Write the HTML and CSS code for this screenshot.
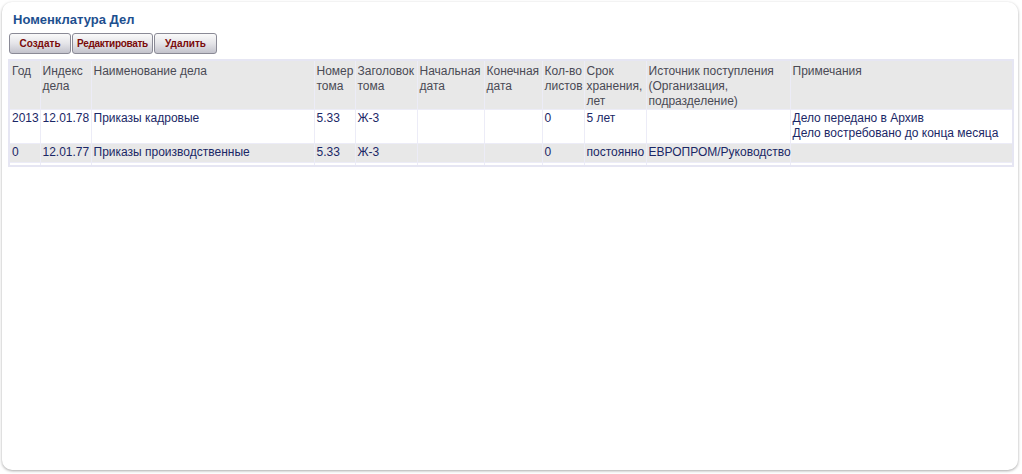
FILE: index.html
```html
<!DOCTYPE html>
<html lang="ru">
<head>
<meta charset="utf-8">
<title>Номенклатура Дел</title>
<link rel="stylesheet" href="styles.css">
</head>
<body>
<div class="panel">
  <h1 class="title">Номенклатура Дел</h1>
  <div class="toolbar">
    <button class="btn btn-create">Создать</button>
    <button class="btn btn-edit">Редактировать</button>
    <button class="btn btn-delete">Удалить</button>
  </div>
  <table class="grid">
    <colgroup>
      <col class="c-year"><col class="c-index"><col class="c-name"><col class="c-vol"><col class="c-head">
      <col class="c-start"><col class="c-end"><col class="c-sheets"><col class="c-term"><col class="c-src"><col class="c-note">
    </colgroup>
    <thead>
      <tr>
        <th>Год</th>
        <th>Индекс дела</th>
        <th>Наименование дела</th>
        <th>Номер тома</th>
        <th>Заголовок тома</th>
        <th>Начальная дата</th>
        <th>Конечная дата</th>
        <th><span class="nowrap">Кол-во</span> листов</th>
        <th>Срок хранения, лет</th>
        <th>Источник поступления (Организация, подразделение)</th>
        <th>Примечания</th>
      </tr>
    </thead>
    <tbody>
      <tr class="odd">
        <td>2013</td>
        <td>12.01.78</td>
        <td>Приказы кадровые</td>
        <td>5.33</td>
        <td>Ж-3</td>
        <td></td>
        <td></td>
        <td>0</td>
        <td>5 лет</td>
        <td></td>
        <td>Дело передано в Архив<br>Дело востребовано до конца месяца</td>
      </tr>
      <tr class="even">
        <td>0</td>
        <td>12.01.77</td>
        <td>Приказы производственные</td>
        <td>5.33</td>
        <td>Ж-3</td>
        <td></td>
        <td></td>
        <td>0</td>
        <td>постоянно</td>
        <td>ЕВРОПРОМ/Руководство</td>
        <td></td>
      </tr>
      <tr class="filler">
        <td></td><td></td><td></td><td></td><td></td><td></td><td></td><td></td><td></td><td></td><td></td>
      </tr>
    </tbody>
  </table>
</div>
</body>
</html>
```

FILE: styles.css
```css
html, body {
  margin: 0;
  padding: 0;
  background: #ffffff;
}

body {
  padding: 2px 4px 4px 2px;
  font-family: "Liberation Sans", Arial, sans-serif;
  font-size: 12px;
}

.panel {
  height: 468px;
  box-sizing: border-box;
  background: #ffffff;
  border-radius: 10px;
  box-shadow: 0 1px 3px rgba(0, 0, 0, 0.35);
  padding: 10px 4px 0 6px;
}

.title {
  margin: 0 0 0 5px;
  font-size: 13px;
  font-weight: bold;
  color: #1d4f8f;
  line-height: 16px;
}

.toolbar {
  display: flex;
  gap: 1px;
  margin: 5px 0 0 1px;
}

.btn {
  height: 21px;
  box-sizing: border-box;
  padding: 0 4px;
  font-family: "Liberation Sans", Arial, sans-serif;
  font-size: 10px;
  font-weight: bold;
  color: #7a0a0a;
  background: linear-gradient(#fafafa, #e4e4e8 50%, #c3c3cc);
  border: 1px solid #8a8a96;
  border-radius: 3px;
  cursor: pointer;
  white-space: nowrap;
}

.btn-create { width: 62px; }
.btn-edit { width: 81px; padding: 0 1px; letter-spacing: -0.3px; }
.btn-delete { width: 63px; }

.nowrap { white-space: nowrap; }

.grid {
  margin-top: 5px;
  width: 1006px;
  table-layout: fixed;
  border-collapse: collapse;
  border: 2px solid #e6e6f3;
  color: #1a2766;
}

.c-year { width: 31px; }
.c-index { width: 51px; }
.c-name { width: 223px; }
.c-vol { width: 41px; }
.c-head { width: 62px; }
.c-start { width: 67px; }
.c-end { width: 58px; }
.c-sheets { width: 42px; }
.c-term { width: 62px; }
.c-src { width: 144px; }
.c-note { width: 223px; }

.grid th,
.grid td {
  border: 1px solid #ececf7;
  padding: 1px 2px 2px 2px;
  text-align: left;
  vertical-align: top;
  line-height: 15px;
  white-space: normal;
}

.grid th {
  font-weight: normal;
  color: #4a4a55;
  background: #e8e8e8;
  height: 45px;
  padding-top: 3px;
  padding-bottom: 0;
}

.grid tr.odd td {
  background: #ffffff;
  height: 29px;
}

.grid tr.even td {
  background: #e8e8e8;
  white-space: nowrap;
}

.grid tr.filler td {
  height: 2px;
  padding: 0;
  background: #ffffff;
  line-height: 2px;
}
```
